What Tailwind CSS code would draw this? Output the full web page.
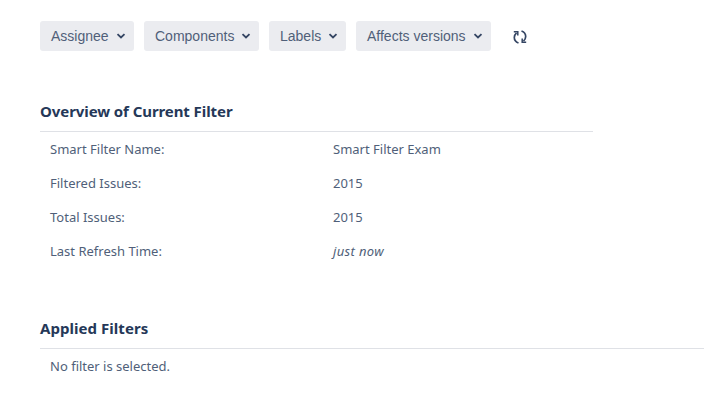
<!DOCTYPE html>
<html><head><script src="https://cdn.jsdelivr.net/npm/@tailwindcss/browser@4"></script></head>
<body class="bg-white w-[704px] h-[401px] overflow-hidden font-['Noto_Sans',sans-serif] text-[13px] text-[#505f79]">
<div class="pl-10 pt-[21px]">
 <div class="flex items-center gap-[10px] h-[30px] font-['Liberation_Sans',sans-serif] text-[14px]">
  <button class="flex items-center h-[30px] w-[94px] pl-[11px] rounded-[3px] bg-[#ebecf0] text-[#505f79]">Assignee<svg class="ml-[7px]" width="10" height="8" viewBox="0 0 10 8"><path d="M1.5 2.200 5 5.500 8.500 2.200" fill="none" stroke="#344563" stroke-width="1.800"/></svg></button>
  <button class="flex items-center h-[30px] w-[115px] pl-[11px] rounded-[3px] bg-[#ebecf0] text-[#505f79]">Components<svg class="ml-[7px]" width="10" height="8" viewBox="0 0 10 8"><path d="M1.5 2.200 5 5.500 8.500 2.200" fill="none" stroke="#344563" stroke-width="1.800"/></svg></button>
  <button class="flex items-center h-[30px] w-[77px] pl-[11px] rounded-[3px] bg-[#ebecf0] text-[#505f79]">Labels<svg class="ml-[7px]" width="10" height="8" viewBox="0 0 10 8"><path d="M1.5 2.200 5 5.500 8.500 2.200" fill="none" stroke="#344563" stroke-width="1.800"/></svg></button>
  <button class="flex items-center h-[30px] w-[135px] pl-[11px] rounded-[3px] bg-[#ebecf0] text-[#505f79]">Affects versions<svg class="ml-[7px]" width="10" height="8" viewBox="0 0 10 8"><path d="M1.5 2.200 5 5.500 8.500 2.200" fill="none" stroke="#344563" stroke-width="1.800"/></svg></button>
  <svg class="ml-[11px] mt-[1px]" width="16" height="16" viewBox="0 0 16 16" fill="none" stroke="#344563" stroke-width="1.700"><path d="M6.500 14C3.800 13 2.300 11 2.300 8.500 2.300 6.800 3 5.200 4.500 3.800"/><path d="M1.800 2.800H5.800V6.500" stroke-width="1.500"/><path d="M9.500 2C12.200 3 13.700 5 13.700 7.500 13.700 9.200 13 10.800 11.500 12.200"/><path d="M14.200 13.200H10.200V9.500" stroke-width="1.500"/></svg>
 </div>
 <h2 class="mt-[50px] text-[15px] leading-[20px] font-bold tracking-[-0.08px] text-[#253858] w-[553px] h-[31px] border-b border-[#dfe1e6]">Overview of Current Filter</h2>
 <div class="w-[553px] pl-[10px] pt-[1px]">
  <div class="flex h-[34px] items-center"><span class="w-[283px]">Smart Filter Name:</span><span>Smart Filter Exam</span></div>
  <div class="flex h-[34px] items-center"><span class="w-[283px]">Filtered Issues:</span><span>2015</span></div>
  <div class="flex h-[34px] items-center"><span class="w-[283px]">Total Issues:</span><span>2015</span></div>
  <div class="flex h-[34px] items-center"><span class="w-[283px]">Last Refresh Time:</span><span class="italic tracking-[0.35px]">just now</span></div>
 </div>
 <h2 class="mt-[49px] text-[15px] leading-[20px] font-bold tracking-[0.05px] text-[#253858] h-[31px] border-b border-[#dfe1e6]">Applied Filters</h2>
 <div class="pl-[10px] mt-[1px] h-[34px] flex items-center">No filter is selected.</div>
</div>
</body></html>
